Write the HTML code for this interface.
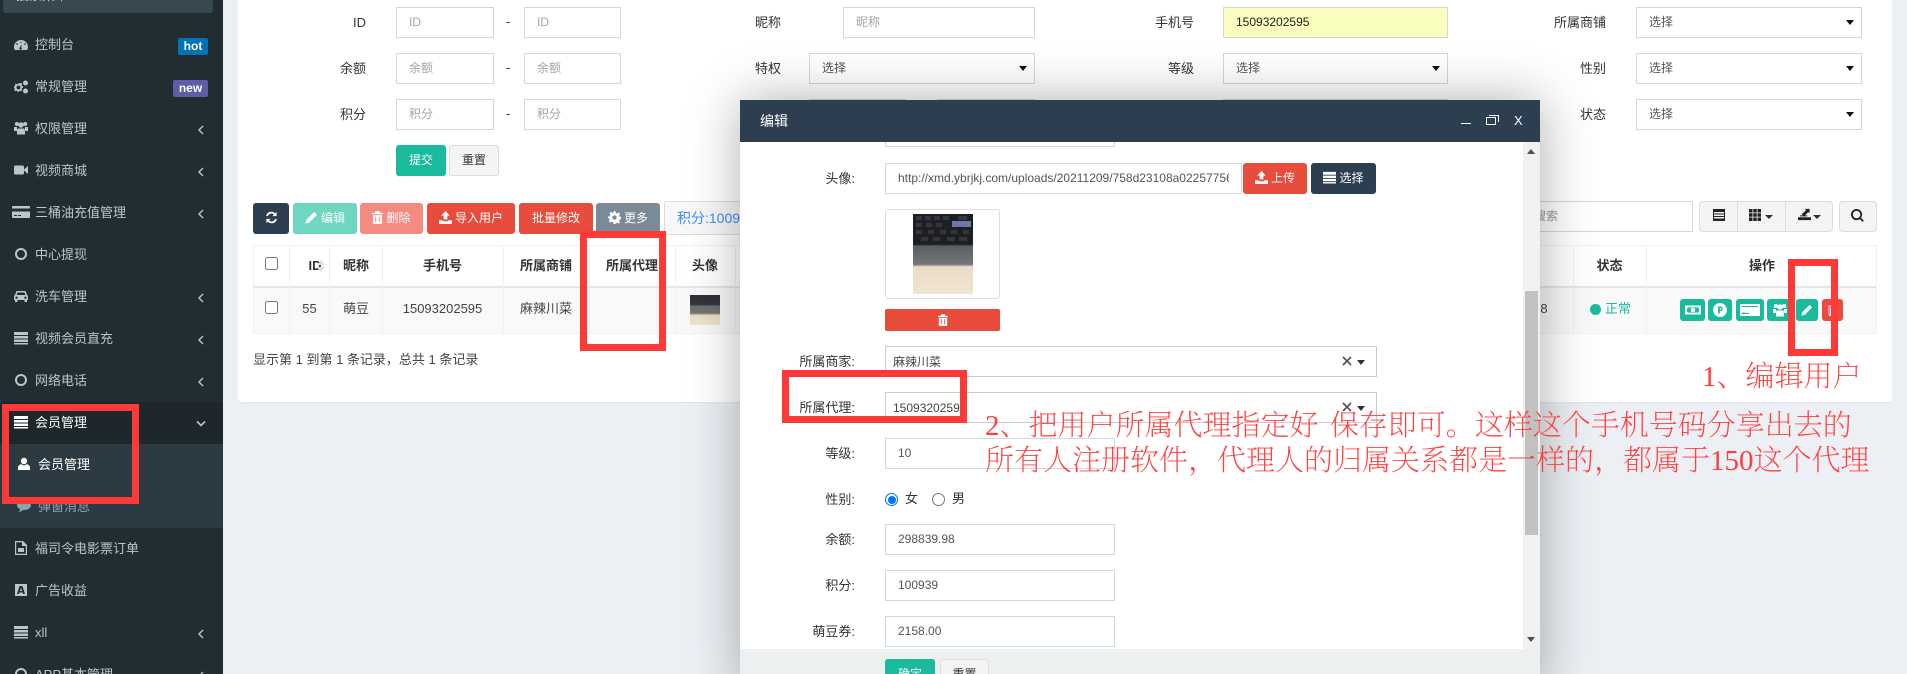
<!DOCTYPE html>
<html lang="zh-CN"><head><meta charset="utf-8"><title>会员管理</title>
<style>
*{box-sizing:border-box}
html,body{margin:0;padding:0;width:1907px;height:674px;overflow:hidden;background:#ecf0f5}
body{position:relative;font:13px/1.4 "Liberation Sans","Noto Sans CJK SC",sans-serif;color:#333}
.a{position:absolute;white-space:nowrap}
svg{fill:currentColor;display:block}
.s{color:#b8c7ce;left:35px;height:20px;line-height:20px}
.i{position:absolute;left:14px;width:14px;height:14px;color:#b8c7ce}
.c{position:absolute;left:197px;width:9px;height:10px;color:#b8c7ce}
.l{position:absolute;height:31px;line-height:31px;text-align:right;color:#333;white-space:nowrap}
.f{position:absolute;height:31px;line-height:29px;border:1px solid #d2d6de;background:#fff;padding-left:12px;color:#555;white-space:nowrap;overflow:hidden;font-size:12px}
.ph{color:#a5a5a5}
.sel{line-height:28.500px}
.sel:after{content:"";position:absolute;right:7px;top:12px;border:4px solid transparent;border-top:5px solid #111;border-bottom:0}
.b{position:absolute;height:31px;line-height:31px;text-align:center;color:#fff;border-radius:3px;white-space:nowrap;font-size:12px}
.b svg{display:inline-block;vertical-align:-2px;margin-right:3px;width:13px;height:13px}
.g{background:#f4f4f4;border:1px solid #ddd;color:#333;line-height:29px}
.th,.td{position:absolute;text-align:center;white-space:nowrap;line-height:20px}
.th{top:266px;margin-top:-10px;font-weight:700;color:#333}
.td{top:309px;margin-top:-10px;color:#444}
.v{position:absolute;background:#f0f0f0;width:1px}
.o{position:absolute;top:299px;height:22px;background:#18bc9c;border-radius:3px;color:#fff}
.o svg{position:absolute;left:50%;top:50%;transform:translate(-50%,-50%)}
.r{position:absolute;border:7px solid #ff3838;z-index:30}
.n{position:absolute;z-index:31;color:#ff3e3e;font-family:"Liberation Serif","Noto Serif CJK SC",serif;font-size:29px;line-height:36px;white-space:pre;font-weight:200}
</style></head><body>
<svg width="0" height="0" style="position:absolute"><defs>
<symbol id="dash" viewBox="0 0 14 14"><path d="M7 2A7 7 0 0 0 0 9c0 1.3.3 2.3.9 3h12.200c.6-.7.9-1.700.9-3a7 7 0 0 0-7-7zM3 5l1 1-1 1-1-1zM7 3.500l.7 1.500h-1.400zM11 5l1 1-1 1-1-1zM7.600 6l-.2 3.500a1.200 1.200 0 1 1-1.200-.3z" fill-rule="evenodd"/></symbol>
<symbol id="cogs" viewBox="0 0 14 14"><path fill-rule="evenodd" d="M5 3l1.200.3.800-.6 1.200 1.200-.6 1 .4 1.100 1 .3v1.500l-1 .4-.4 1 .6 1-1.200 1.200-.9-.6-1.100.4L5 12H3.700l-.3-1-1-.4-1 .6L.2 10l.6-1-.4-1L0 7.700V6.200l1-.3.400-1-.6-1L2 3.700l1 .6 1-.4zM4.500 5.500a2 2 0 1 0 .01 0z"/><circle cx="11.500" cy="3" r="2.500"/><circle cx="11.500" cy="11" r="2.500"/></symbol>
<symbol id="users" viewBox="0 0 14 14"><circle cx="2.800" cy="3" r="2"/><circle cx="11.200" cy="3" r="2"/><circle cx="7" cy="4" r="2.700"/><path d="M0 6h3v3l1 1.200V10H0zM14 6h-3v3l-1 1.200V10h4zM3.700 7.500h6.600L11 9v4.500H3V9z"/></symbol>
<symbol id="video" viewBox="0 0 14 14"><rect x="0" y="2.500" width="10" height="9" rx="1.500"/><path d="M10 6.500L14 3v8l-4-3.500z"/></symbol>
<symbol id="card" viewBox="0 0 18 14"><path d="M1 1h16a1 1 0 0 1 1 1v1.500H0V2a1 1 0 0 1 1-1zM0 6.500h18V12a1 1 0 0 1-1 1H1a1 1 0 0 1-1-1zM2 10v1h3v-1zm4 0v1h3v-1z" fill-rule="evenodd"/></symbol>
<symbol id="circ" viewBox="0 0 14 14"><circle cx="7" cy="7" r="5" fill="none" stroke="currentColor" stroke-width="2"/></symbol>
<symbol id="car" viewBox="0 0 16 14"><path fill-rule="evenodd" d="M3.500 2h9l1.500 4 1 .8V11h-1v2h-2.500v-2h-7v2H2v-2H1V6.800L2 6zM4.500 3.500L3.700 6h8.600l-.8-2.500zM3.500 7.500a1.200 1.200 0 1 0 .01 0zM12.500 7.500a1.200 1.200 0 1 0 .01 0z"/></symbol>
<symbol id="list" viewBox="0 0 14 14"><path d="M0 1h14v3H0zM0 5h14v2.500H0zM0 8.500h14V11H0zM0 12h14v1.500H0z"/></symbol>
<symbol id="lt" viewBox="0 0 9 10"><path d="M6 1L2 5l4 4" fill="none" stroke="currentColor" stroke-width="1.400"/></symbol>
<symbol id="dn" viewBox="0 0 10 9"><path d="M1 2.500l4 4 4-4" fill="none" stroke="currentColor" stroke-width="1.600"/></symbol>
<symbol id="user" viewBox="0 0 12 14"><circle cx="6" cy="4" r="3.200"/><path d="M2.500 7l3.500 1.500L9.500 7 12 9.500V13H0V9.500z"/></symbol>
<symbol id="cmt" viewBox="0 0 14 14"><path d="M7 1.500c3.900 0 7 2.200 7 4.800S10.900 11 7 11h-1C4.500 12.500 2.500 13 1.500 13c1-.9 1.500-2 1.500-2.900C1.200 9.300 0 7.900 0 6.300 0 3.700 3.100 1.500 7 1.500z"/></symbol>
<symbol id="file" viewBox="0 0 12 14"><path fill-rule="evenodd" d="M0 0h8l4 4v10H0zM1.200 1.200v11.600h9.600V5H7V1.200zM3 7h6v4H3z"/></symbol>
<symbol id="fa" viewBox="0 0 14 14"><path fill-rule="evenodd" d="M1 1h12v12H1zM5.500 3l-2.500 8h2l.4-1.500h3.200L9 11h2L8.500 3zM7 5l1.100 3H5.900z"/></symbol>
<symbol id="trash" viewBox="0 0 12 14"><path fill-rule="evenodd" d="M4 0h4l1 2h3v1.500H0V2h3zM1 4.500h10V14H1zM3.500 6v6h1V6zM7.500 6v6h1V6z"/></symbol>
<symbol id="up" viewBox="0 0 14 14"><path d="M7 0l4.500 5H9v4H5V5H2.500zM0 10h4v1h6v-1h4v4H0z"/></symbol>
<symbol id="ref" viewBox="0 0 14 14"><path d="M12.500 1v4.500H8l1.700-1.700A4 4 0 0 0 3.200 5.500L1.100 5A6 6 0 0 1 11 2.500zM1.500 13V8.500H6l-1.700 1.700a4 4 0 0 0 6.500-1.700l2.100.5A6 6 0 0 1 3 11.500z"/></symbol>
<symbol id="pen" viewBox="0 0 14 14"><path d="M10 1l3 3-8.500 8.500-4 1 1-4z"/></symbol>
<symbol id="cog" viewBox="0 0 14 14"><path fill-rule="evenodd" d="M6 0h2l.4 2 1.600.7L11.700 1.600 13.100 3 12 4.600l.7 1.600 1.900.4v2l-1.900.4-.7 1.600 1 1.600-1.400 1.400-1.600-1-1.600.6L8 14H6l-.4-1.900-1.600-.6-1.700 1-1.400-1.400 1.100-1.600-.7-1.600L0 8V6l1.900-.4.700-1.600-1-1.600L3 1l1.700 1 1.500-.6zM7 4.700a2.300 2.300 0 1 0 .01 0z"/></symbol>
<symbol id="cash" viewBox="0 0 18 12"><path fill-rule="evenodd" d="M0 1h18v10H0zM3.500 3A2 2 0 0 1 2 4.500v3A2 2 0 0 1 3.500 9h11a2 2 0 0 1 1.500-1.500v-3A2 2 0 0 1 14.500 3zM9 3.500a2.500 2.500 0 1 1-.01 0z"/></symbol>
<symbol id="pt" viewBox="0 0 14 14"><path fill-rule="evenodd" d="M7 0a7 7 0 1 1-.01 0zM5 3.500v7h1.800V8H8a2.300 2.300 0 0 0 0-4.500zM6.800 5h1a.8.8 0 0 1 0 1.600h-1z"/></symbol>
<symbol id="amex" viewBox="0 0 20 14"><path fill-rule="evenodd" d="M0 1h20v12H0zM2 3v1h16V3zM2 9.500v1.500h7v-1z"/></symbol>
<symbol id="srch" viewBox="0 0 14 14"><path fill-rule="evenodd" d="M6 0a6 6 0 0 1 4.800 9.500l3 3-1.400 1.400-3-3A6 6 0 1 1 6 0zm0 2a4 4 0 1 0 .01 0z"/></symbol>
<symbol id="gridd" viewBox="0 0 12 12"><path d="M0 0h3.500v3.500H0zM4.250 0h3.500v3.500h-3.500zM8.500 0H12v3.500H8.500zM0 4.250h3.500v3.500H0zM4.250 4.250h3.500v3.500h-3.500zM8.500 4.250H12v3.500H8.500zM0 8.500h3.500V12H0zM4.250 8.500h3.500V12h-3.500zM8.500 8.500H12V12H8.500z"/></symbol>
<symbol id="tbl" viewBox="0 0 12 12"><path fill-rule="evenodd" d="M0 0h12v12H0zM1 3v1.500h10V3zM1 5.500V7h10V5.500zM1 8v1.500h10V8z"/></symbol>
<symbol id="exp" viewBox="0 0 14 12"><path d="M2 7h3L4 5.500 6 4l2.500-2.500L7.500 0h5v4.500l-1.500-1L7.500 7H10v1H2zM0 9h14v3H0z"/></symbol>
</defs></svg>

<!-- sidebar -->
<div class="a" style="left:0;top:0;width:223px;height:674px;background:#222d32"></div>
<div class="a" style="left:3px;top:-10px;width:210px;height:23px;background:#374850;border-radius:3px"></div>
<div class="a" style="left:16px;top:-12px;line-height:16px;color:#b8c7ce">搜索菜单</div>
<div class="a" style="left:0;top:402px;width:223px;height:42px;background:#1e282c"></div>
<div class="a" style="left:0;top:444px;width:223px;height:84px;background:#2c3b41"></div>

<svg class="i" style="top:38px"><use href="#dash"/></svg><div class="a s" style="top:35px">控制台</div>
<div class="a" style="left:178px;top:38px;width:30px;height:17px;background:#0073b7;border-radius:2px;color:#fff;font:700 12px/17px 'Liberation Sans',sans-serif;text-align:center">hot</div>
<svg class="i" style="top:80px"><use href="#cogs"/></svg><div class="a s" style="top:77px">常规管理</div>
<div class="a" style="left:173px;top:80px;width:35px;height:17px;background:#605ca8;border-radius:2px;color:#fff;font:700 12px/17px 'Liberation Sans',sans-serif;text-align:center">new</div>
<svg class="i" style="top:121px"><use href="#users"/></svg><div class="a s" style="top:119px">权限管理</div><svg class="c" style="top:125px"><use href="#lt"/></svg>
<svg class="i" style="top:163px"><use href="#video"/></svg><div class="a s" style="top:161px">视频商城</div><svg class="c" style="top:167px"><use href="#lt"/></svg>
<svg class="i" style="left:12px;top:205px;width:18px"><use href="#card"/></svg><div class="a s" style="top:203px">三桶油充值管理</div><svg class="c" style="top:209px"><use href="#lt"/></svg>
<svg class="i" style="top:247px"><use href="#circ"/></svg><div class="a s" style="top:245px">中心提现</div>
<svg class="i" style="left:13px;top:289px;width:16px"><use href="#car"/></svg><div class="a s" style="top:287px">洗车管理</div><svg class="c" style="top:293px"><use href="#lt"/></svg>
<svg class="i" style="top:331px"><use href="#list"/></svg><div class="a s" style="top:329px">视频会员直充</div><svg class="c" style="top:335px"><use href="#lt"/></svg>
<svg class="i" style="top:373px"><use href="#circ"/></svg><div class="a s" style="top:371px">网络电话</div><svg class="c" style="top:377px"><use href="#lt"/></svg>
<svg class="i" style="top:415px;color:#fff"><use href="#list"/></svg><div class="a s" style="top:413px;color:#fff">会员管理</div><svg class="a" style="left:196px;top:419px;width:10px;height:9px;color:#b8c7ce"><use href="#dn"/></svg>
<svg class="i" style="left:18px;top:457px;width:12px;color:#fff"><use href="#user"/></svg><div class="a s" style="left:38px;top:455px;color:#fff">会员管理</div>
<svg class="i" style="left:17px;top:499px;color:#8aa4af"><use href="#cmt"/></svg><div class="a s" style="left:38px;top:497px;color:#8aa4af">弹窗消息</div>
<svg class="i" style="left:15px;top:541px;width:12px"><use href="#file"/></svg><div class="a s" style="top:539px">福司令电影票订单</div>
<svg class="i" style="top:583px"><use href="#fa"/></svg><div class="a s" style="top:581px">广告收益</div>
<svg class="i" style="top:625px"><use href="#list"/></svg><div class="a s" style="top:623px">xll</div><svg class="c" style="top:629px"><use href="#lt"/></svg>
<svg class="i" style="top:667px"><use href="#circ"/></svg><div class="a s" style="top:665px">APP基本管理</div><svg class="c" style="top:671px"><use href="#lt"/></svg>

<!-- box -->
<div class="a" style="left:238px;top:-5px;width:1654px;height:407px;background:#fff;border-radius:3px;box-shadow:0 1px 1px rgba(0,0,0,.05)"></div>

<!-- search form -->
<div class="l" style="left:300px;width:66px;top:7px">ID</div><div class="f ph" style="left:396px;top:7px;width:98px">ID</div><div class="a" style="left:506px;top:13px">-</div><div class="f ph" style="left:524px;top:7px;width:97px">ID</div>
<div class="l" style="left:300px;width:66px;top:53px">余额</div><div class="f ph" style="left:396px;top:53px;width:98px">余额</div><div class="a" style="left:506px;top:59px">-</div><div class="f ph" style="left:524px;top:53px;width:97px">余额</div>
<div class="l" style="left:300px;width:66px;top:99px">积分</div><div class="f ph" style="left:396px;top:99px;width:98px">积分</div><div class="a" style="left:506px;top:105px">-</div><div class="f ph" style="left:524px;top:99px;width:97px">积分</div>
<div class="b" style="left:396px;top:145px;width:50px;background:#18bc9c">提交</div>
<div class="b g" style="left:449px;top:145px;width:50px">重置</div>

<div class="l" style="left:700px;width:81px;top:7px">昵称</div><div class="f ph" style="left:843px;top:7px;width:192px">昵称</div>
<div class="l" style="left:700px;width:81px;top:53px">特权</div><div class="f sel" style="left:809px;top:53px;width:226px">选择</div>
<div class="f" style="left:809px;top:99px;width:97px"></div><div class="f" style="left:937px;top:99px;width:98px"></div>
<div class="l" style="left:1100px;width:94px;top:7px">手机号</div><div class="f" style="left:1223px;top:7px;width:225px;background:#faffbd;color:#222">15093202595</div>
<div class="l" style="left:1100px;width:94px;top:53px">等级</div><div class="f sel" style="left:1223px;top:53px;width:225px">选择</div>
<div class="f" style="left:1223px;top:99px;width:225px"></div>
<div class="l" style="left:1500px;width:106px;top:7px">所属商铺</div><div class="f sel" style="left:1636px;top:7px;width:226px">选择</div>
<div class="l" style="left:1500px;width:106px;top:53px">性别</div><div class="f sel" style="left:1636px;top:53px;width:226px">选择</div>
<div class="l" style="left:1500px;width:106px;top:99px">状态</div><div class="f sel" style="left:1636px;top:99px;width:226px">选择</div>

<!-- toolbar -->
<div class="b" style="left:253px;top:203px;width:36px;background:#2c3e50"><svg style="margin:0"><use href="#ref"/></svg></div>
<div class="b" style="left:293px;top:203px;width:64px;background:#6ed6c1"><svg><use href="#pen"/></svg>编辑</div>
<div class="b" style="left:360px;top:203px;width:63px;background:#f38b80"><svg style="width:11px"><use href="#trash"/></svg>删除</div>
<div class="b" style="left:427px;top:203px;width:88px;background:#e74c3c"><svg><use href="#up"/></svg>导入用户</div>
<div class="b" style="left:519px;top:203px;width:74px;background:#e74c3c">批量修改</div>
<div class="b" style="left:596px;top:203px;width:64px;background:#7b8a97"><svg><use href="#cog"/></svg>更多</div>
<div class="b" style="left:664px;top:201px;width:110px;height:34px;background:#f8f8f8;border:1px solid #ddd;color:#3c8dff;line-height:32px;text-align:left;padding-left:12px;font-size:14px">积分:1009</div>

<div class="f ph" style="left:1500px;top:201px;width:193px;padding-left:33px;color:#999">搜索</div>
<div class="b g" style="left:1699px;top:201px;width:134px;border-radius:4px"></div>
<div class="a" style="left:1737px;top:202px;width:1px;height:29px;background:#ddd"></div>
<div class="a" style="left:1785px;top:202px;width:1px;height:29px;background:#ddd"></div>
<svg class="a" style="left:1713px;top:209px;width:12px;height:12px;color:#222"><use href="#tbl"/></svg>
<svg class="a" style="left:1749px;top:209px;width:12px;height:12px;color:#222"><use href="#gridd"/></svg>
<div class="a" style="left:1765px;top:215px;border:4px solid transparent;border-top:4px solid #333;border-bottom:0"></div>
<svg class="a" style="left:1798px;top:208px;width:13px;height:13px;color:#222"><use href="#exp"/></svg>
<div class="a" style="left:1813px;top:215px;border:4px solid transparent;border-top:4px solid #333;border-bottom:0"></div>
<div class="b g" style="left:1839px;top:201px;width:38px;border-radius:4px"></div>
<svg class="a" style="left:1851px;top:209px;width:13px;height:13px;color:#222"><use href="#srch"/></svg>

<!-- table -->
<div class="a" style="left:253px;top:245px;width:1624px;height:89px;border:1px solid #f0f0f0"></div>
<div class="a" style="left:254px;top:287px;width:1622px;height:46px;background:#f9f9f9"></div>
<div class="a" style="left:254px;top:286px;width:1622px;height:2px;background:#e6e6e6"></div>
<div class="v" style="left:289px;top:245px;height:89px"></div><div class="v" style="left:329px;top:245px;height:89px"></div><div class="v" style="left:382px;top:245px;height:89px"></div><div class="v" style="left:503px;top:245px;height:89px"></div><div class="v" style="left:589px;top:245px;height:89px"></div><div class="v" style="left:675px;top:245px;height:89px"></div><div class="v" style="left:735px;top:245px;height:89px"></div><div class="v" style="left:1573px;top:245px;height:89px"></div><div class="v" style="left:1646px;top:245px;height:89px"></div>
<div class="a" style="left:265px;top:257px;width:13px;height:13px;border:1px solid #767676;border-radius:2.500px;background:#fff"></div>
<div class="a" style="left:265px;top:301px;width:13px;height:13px;border:1px solid #767676;border-radius:2.500px;background:#fff"></div>
<div class="th" style="left:290px;width:50px">ID</div>
<div class="a" style="left:317px;top:260px;border:4px solid transparent;border-bottom:5px solid #ddd;border-top:0"></div>
<div class="a" style="left:317px;top:267px;border:4px solid transparent;border-top:5px solid #ddd;border-bottom:0"></div>
<div class="th" style="left:330px;width:52px">昵称</div><div class="th" style="left:382px;width:121px">手机号</div><div class="th" style="left:503px;width:86px">所属商铺</div><div class="th" style="left:589px;width:86px">所属代理</div><div class="th" style="left:675px;width:60px">头像</div><div class="th" style="left:1573px;width:73px">状态</div><div class="th" style="left:1647px;width:230px">操作</div>
<div class="td" style="left:290px;width:39px">55</div><div class="td" style="left:330px;width:52px">萌豆</div><div class="td" style="left:382px;width:121px">15093202595</div><div class="td" style="left:503px;width:86px">麻辣川菜</div>
<div class="a" style="left:690px;top:295px;width:30px;height:30px;background:linear-gradient(#2f3036 0,#34353a 32%,#6b6e73 37%,#70736f 60%,#e9dcc8 68%,#f0e3d0 100%)"></div>
<div class="td" style="left:1540px;width:8px">8</div>
<div class="a" style="left:1590px;top:304px;width:11px;height:11px;border-radius:50%;background:#18bc9c"></div>
<div class="a" style="left:1605px;top:299px;color:#18bc9c;line-height:20px">正常</div>
<div class="o" style="left:1680px;width:25px"><svg width="16" height="12"><use href="#cash"/></svg></div>
<div class="o" style="left:1708px;width:24px"><svg width="14" height="14"><use href="#pt"/></svg></div>
<div class="o" style="left:1736px;width:28px"><svg width="20" height="14"><use href="#amex"/></svg></div>
<div class="o" style="left:1767px;width:25px"><svg width="14" height="14"><use href="#users"/></svg></div>
<div class="o" style="left:1796px;width:22px"><svg width="12" height="12"><use href="#pen"/></svg></div>
<div class="o" style="left:1822px;width:21px;background:#e74c3c"><svg width="10" height="12"><use href="#trash"/></svg></div>
<div class="a" style="left:1828px;top:305px;width:2px;height:9px;background:#ff7fc8"></div>
<div class="a" style="left:253px;top:350px;line-height:20px;color:#444">显示第 1 到第 1 条记录，总共 1 条记录</div>

<!-- modal -->
<div class="a" style="left:740px;top:100px;width:800px;height:590px;background:#fff;box-shadow:1px 1px 50px rgba(0,0,0,.32);z-index:10;overflow:hidden">
 <div class="a" style="left:783px;top:42px;width:17px;height:507px;background:#f1f1f1"></div>
 <div class="a" style="left:785px;top:191px;width:13px;height:244px;background:#c1c1c1"></div>
 <div class="a" style="left:787px;top:49px;border:4px solid transparent;border-bottom:5px solid #505050;border-top:0"></div>
 <div class="a" style="left:787px;top:537px;border:4px solid transparent;border-top:5px solid #505050;border-bottom:0"></div>

 <div class="f" style="left:145px;top:16px;width:230px"></div>
 <div class="a" style="left:0;top:0;width:800px;height:42px;background:#2c3e50;color:#fff;padding-left:20px;line-height:42px;font-size:14px">编辑</div>
 <div class="a" style="left:721px;top:23px;width:10px;height:1px;background:#fff"></div>
 <div class="a" style="left:746px;top:17px;width:10px;height:8px;border:1px solid #fff;background:#2c3e50;z-index:2"></div>
 <div class="a" style="left:749px;top:15px;width:10px;height:7px;border:1px solid #fff;border-left:0;border-bottom:0"></div>
 <div class="a" style="left:774px;top:11px;color:#fff;font-size:13px;line-height:20px">X</div>

 <div class="l" style="left:0;width:115px;top:63px">头像:</div>
 <div class="f" style="left:145px;top:63px;width:357px"><span style="display:block;width:331px;overflow:hidden">http://xmd.ybrjkj.com/uploads/20211209/758d23108a0225775682</span></div>
 <div class="b" style="left:503px;top:63px;width:64px;background:#e74c3c"><svg><use href="#up"/></svg>上传</div>
 <div class="b" style="left:571px;top:63px;width:65px;background:#2c3e50"><svg><use href="#list"/></svg>选择</div>
 <div class="a" style="left:145px;top:109px;width:115px;height:90px;border:1px solid #ddd;border-radius:3px"></div>
 <svg class="a" style="left:173px;top:114px;width:60px;height:80px" viewBox="0 0 60 80"><defs><linearGradient id="lg" x1="0" y1="0" x2="0" y2="1"><stop offset="0" stop-color="#1e1f24"/><stop offset=".38" stop-color="#1d1e22"/><stop offset=".4" stop-color="#5a5e64"/><stop offset=".63" stop-color="#74787c"/><stop offset=".66" stop-color="#eadcc6"/><stop offset="1" stop-color="#f2e4d2"/></linearGradient></defs><rect width="60" height="80" fill="url(#lg)"/><g fill="#34363c"><rect x="3" y="2" width="6" height="4"/><rect x="12" y="2" width="6" height="4"/><rect x="21" y="2" width="6" height="4"/><rect x="30" y="2" width="6" height="4"/><rect x="45" y="2" width="9" height="4"/><rect x="3" y="9" width="6" height="4"/><rect x="13" y="9" width="6" height="4"/><rect x="23" y="9" width="6" height="4"/><rect x="3" y="16" width="6" height="4"/><rect x="15" y="16" width="6" height="4"/><rect x="27" y="16" width="6" height="4"/><rect x="38" y="16" width="6" height="4"/><rect x="50" y="16" width="6" height="4"/><rect x="8" y="23" width="7" height="4"/><rect x="20" y="23" width="7" height="4"/><rect x="34" y="23" width="8" height="4"/><rect x="46" y="23" width="8" height="4"/></g><rect x="39" y="7" width="19" height="6" fill="#6e78a8"/></svg>
 <div class="b" style="left:145px;top:209px;width:115px;height:22px;line-height:22px;background:#e74c3c;border-radius:2px"><svg style="margin:0;width:10px;height:12px"><use href="#trash"/></svg></div>

 <div class="l" style="left:0;width:115px;top:246px">所属商家:</div>
 <div class="a" style="left:145px;top:246px;width:492px;height:31px;border:1px solid #ccc;line-height:31px;padding-left:7px;color:#444;background:#fff;font-size:12px">麻辣川菜
  <svg class="a" style="left:456px;top:9px;width:10px;height:10px;fill:none;stroke:#556;stroke-width:1.800" viewBox="0 0 10 10"><path d="M1 1l8 8M9 1l-8 8"/></svg><span class="a" style="left:471px;top:13px;border:4px solid transparent;border-top:5px solid #333;border-bottom:0"></span></div>
 <div class="l" style="left:0;width:115px;top:292px">所属代理:</div>
 <div class="a" style="left:145px;top:292px;width:492px;height:31px;border:1px solid #ccc;line-height:31px;padding-left:7px;color:#444;background:#fff;font-size:12px">1509320259
  <svg class="a" style="left:456px;top:9px;width:10px;height:10px;fill:none;stroke:#556;stroke-width:1.800" viewBox="0 0 10 10"><path d="M1 1l8 8M9 1l-8 8"/></svg><span class="a" style="left:471px;top:13px;border:4px solid transparent;border-top:5px solid #333;border-bottom:0"></span></div>
 <div class="l" style="left:0;width:115px;top:338px">等级:</div><div class="f" style="left:145px;top:338px;width:230px">10</div>
 <div class="l" style="left:0;width:115px;top:384px">性别:</div>
 <div class="a" style="left:145px;top:393px;width:13px;height:13px;border-radius:50%;border:1px solid #0075ff;background:#fff"></div><div class="a" style="left:147.500px;top:395.500px;width:8px;height:8px;border-radius:50%;background:#0075ff"></div>
 <div class="a" style="left:165px;top:389px;line-height:20px">女</div>
 <div class="a" style="left:192px;top:393px;width:13px;height:13px;border-radius:50%;border:1px solid #767676;background:#fff"></div>
 <div class="a" style="left:212px;top:389px;line-height:20px">男</div>
 <div class="l" style="left:0;width:115px;top:424px">余额:</div><div class="f" style="left:145px;top:424px;width:230px">298839.98</div>
 <div class="l" style="left:0;width:115px;top:470px">积分:</div><div class="f" style="left:145px;top:470px;width:230px">100939</div>
 <div class="l" style="left:0;width:115px;top:516px">萌豆券:</div><div class="f" style="left:145px;top:516px;width:230px">2158.00</div>
 <div class="a" style="left:0;top:549px;width:800px;height:41px;background:#ecf0f1"></div>
 <div class="b" style="left:145px;top:559px;width:50px;background:#18bc9c">确定</div>
 <div class="b g" style="left:200px;top:559px;width:49px">重置</div>
</div>

<!-- annotations -->
<div class="r" style="left:2px;top:404px;width:137px;height:100px"></div>
<div class="r" style="left:580px;top:231px;width:86px;height:120px"></div>
<div class="r" style="left:782px;top:370px;width:185px;height:53px"></div>
<div class="r" style="left:1788px;top:259px;width:50px;height:97px"></div>
<div class="n" style="left:1702px;top:359px">1、编辑用户</div>
<div class="n" style="left:985px;top:408px;word-spacing:4px">2、把用户所属代理指定好 保存即可。这样这个手机号码分享出去的</div>
<div class="n" style="left:985px;top:443px">所有人注册软件，代理人的归属关系都是一样的，都属于150这个代理</div>
</body></html>
